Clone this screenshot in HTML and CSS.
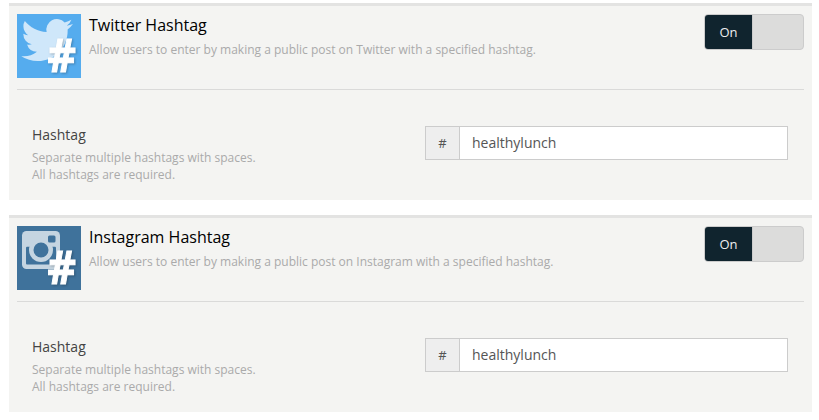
FILE: index.html
```
<!DOCTYPE html>
<html>
<head>
    <meta charset="utf-8">
    <title>Hashtag Entries</title>
    <link rel="stylesheet" href="styles.css">
</head>
<body>
    <div class="panel">
        <div class="panel-header">
            <svg class="logo" width="64" height="64" viewBox="0 0 64 64">
                <rect width="64" height="64" fill="#55acee"/>
                <path transform="translate(4.3 .2) scale(2.15)" fill="#cfe7fa" d="M23.953 4.57a10 10 0 01-2.825.775 4.958 4.958 0 002.163-2.723c-.951.555-2.005.959-3.127 1.184a4.92 4.92 0 00-8.384 4.482C7.69 8.095 4.067 6.13 1.64 3.162a4.822 4.822 0 00-.666 2.475c0 1.71.87 3.213 2.188 4.096a4.904 4.904 0 01-2.228-.616v.06a4.923 4.923 0 003.946 4.827 4.996 4.996 0 01-2.212.085 4.936 4.936 0 004.604 3.417 9.867 9.867 0 01-6.102 2.105c-.39 0-.779-.023-1.17-.067a13.995 13.995 0 007.557 2.209c9.053 0 13.998-7.496 13.998-13.985 0-.21 0-.42-.015-.63A9.935 9.935 0 0024 4.59z"/>
                <text class="logo-hash" x="30.500" y="57.500" textLength="28.500" lengthAdjust="spacingAndGlyphs">#</text>
            </svg>
            <div class="heading">
                <h2>Twitter Hashtag</h2>
                <p>Allow users to enter by making a public post on Twitter with a specified hashtag.</p>
            </div>
            <div class="switch"><span class="switch-on">On</span></div>
        </div>
        <div class="panel-body">
            <div class="field-label">
                <label for="twitter-hashtag">Hashtag</label>
                <p>Separate multiple hashtags with spaces.<br>All hashtags are required.</p>
            </div>
            <div class="input-group">
                <span class="addon">#</span>
                <input type="text" id="twitter-hashtag" value="healthylunch">
            </div>
        </div>
    </div>

    <div class="panel">
        <div class="panel-header">
            <svg class="logo" width="64" height="64" viewBox="0 0 64 64">
                <rect width="64" height="64" fill="#3f729b"/>
                <rect x="5" y="5" width="38" height="38" rx="4.500" fill="#c5d5e1"/>
                <rect x="9" y="20.700" width="30" height="17.800" rx="1" fill="#3f729b"/>
                <circle cx="24" cy="24" r="12" fill="#c5d5e1"/>
                <circle cx="24" cy="24" r="7.500" fill="#3f729b"/>
                <rect x="31" y="9.500" width="7.500" height="7" rx="1.500" fill="#3f729b"/>
                <text class="logo-hash" x="30.500" y="57.500" textLength="28.500" lengthAdjust="spacingAndGlyphs">#</text>
            </svg>
            <div class="heading">
                <h2>Instagram Hashtag</h2>
                <p>Allow users to enter by making a public post on Instagram with a specified hashtag.</p>
            </div>
            <div class="switch"><span class="switch-on">On</span></div>
        </div>
        <div class="panel-body">
            <div class="field-label">
                <label for="instagram-hashtag">Hashtag</label>
                <p>Separate multiple hashtags with spaces.<br>All hashtags are required.</p>
            </div>
            <div class="input-group">
                <span class="addon">#</span>
                <input type="text" id="instagram-hashtag" value="healthylunch">
            </div>
        </div>
    </div>
</body>
</html>
```

FILE: styles.css
```
* {
    box-sizing: border-box;
}
body {
    font-family: "Open Sans", sans-serif;
    background-color: #fff;
    margin: 0;
    padding: 3px 7px 0 9px;
}
h2, p {
    margin: 0;
    font-weight: normal;
}
.panel {
    height: 197px;
    margin-bottom: 15px;
    padding: 8px 8px 0;
    border-top: 3px solid #e3e3e2;
    background-color: #f4f4f2;
}
.panel-header {
    display: flex;
    height: 76px;
    border-bottom: 1px solid #dadad9;
}
.logo {
    display: block;
    overflow: visible;
}
.logo-hash {
    font-size: 46px;
    font-weight: 700;
    fill: #fff;
    stroke: #fff;
    stroke-width: 1;
    filter: drop-shadow(1px 1px 1px rgba(0, 0, 0, .25));
}
.heading {
    flex: 1;
    padding-left: 8px;
}
.heading h2 {
    font-size: 16px;
    line-height: 22px;
    color: #000;
}
.heading p, .field-label p {
    font-size: 12px;
    line-height: 17px;
    color: #aaa;
}
.heading p {
    margin-top: 5px;
}
.switch {
    width: 100px;
    height: 36px;
    border: 1px solid #ccc;
    border-radius: 4px;
    background-color: #dcdcdb;
    overflow: hidden;
}
.switch-on {
    display: block;
    width: 48px;
    height: 34px;
    border-right: 1px solid #ccc;
    background-color: #10242e;
    color: #eee;
    font-size: 13px;
    line-height: 35px;
    text-align: center;
}
.panel-body {
    display: flex;
    justify-content: space-between;
    padding: 36px 16px 0 15px;
}
.field-label label {
    display: block;
    font-size: 14px;
    line-height: 17px;
    color: #444;
}
.field-label p {
    margin-top: 6px;
}
.input-group {
    display: flex;
    width: 363px;
    height: 34px;
    border: 1px solid #ccc;
}
.addon {
    width: 34px;
    border-right: 1px solid #ccc;
    background-color: #eee;
    color: #555;
    font-size: 13px;
    line-height: 32px;
    text-align: center;
}
input {
    flex: 1;
    min-width: 0;
    padding: 0 12px 2px;
    border: 0;
    background-color: #fff;
    color: #555;
    font-family: inherit;
    font-size: 14px;
}
```
